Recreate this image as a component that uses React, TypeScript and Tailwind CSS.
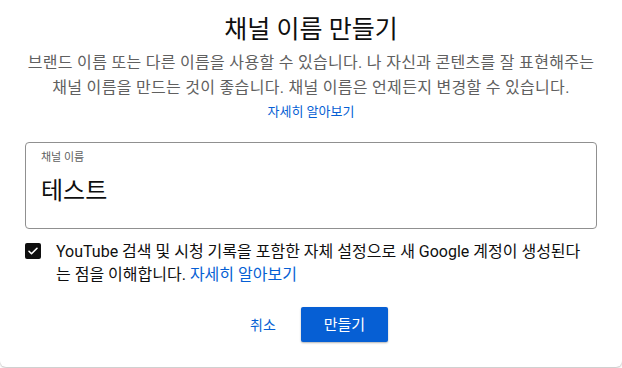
export default function App() {
  return (
    <div
      className="h-[368px] w-[622px] bg-white"
      style={{ fontFamily: 'Roboto, "Noto Sans CJK KR", sans-serif' }}
    >
      <div className="flex h-[367px] flex-col rounded-b-[6px] bg-white px-[25px] shadow-[0_1px_2px_rgba(0,0,0,0.25)]">
        <h1 className="mt-[14px] text-center text-[25px] leading-[32px] font-normal text-[#0f0f0f]">
          채널 이름 만들기
        </h1>
        <p className="mt-[4px] text-center text-[16px] leading-[25px] tracking-[0.3px] text-[#606060]">
          브랜드 이름 또는 다른 이름을 사용할 수 있습니다. 나 자신과 콘텐츠를 잘 표현해주는
          <br />
          채널 이름을 만드는 것이 좋습니다. 채널 이름은 언제든지 변경할 수 있습니다.
        </p>
        <a className="mt-[1px] self-center text-[13px] leading-[22px] text-[#065fd4]">
          자세히 알아보기
        </a>

        <div className="mt-[19px] h-[87px] rounded-[4px] border border-[#909090] px-[15px] pt-[7px]">
          <div className="text-[11px] leading-[16px] text-[#606060]">채널 이름</div>
          <div className="mt-[9px] text-[24px] leading-[32px] text-[#0f0f0f]">테스트</div>
        </div>

        <div className="mt-[14px] flex items-start gap-[15px]">
          <span className="flex h-[16px] w-[16px] shrink-0 items-center justify-center rounded-[2px] bg-[#0f0f0f]">
            <svg width="12" height="12" viewBox="0 0 24 24" fill="none">
              <path
                d="M4 12.5l5 5L20 6.5"
                stroke="white"
                strokeWidth="3.2"
                strokeLinecap="round"
                strokeLinejoin="round"
              />
            </svg>
          </span>
          <p className="-mt-[3px] text-[16px] leading-[23px] text-[#0f0f0f]">
            YouTube 검색 및 시청 기록을 포함한 자체 설정으로 새 Google 계정이 생성된다
            <br />는 점을 이해합니다. <a className="text-[#065fd4]">자세히 알아보기</a>
          </p>
        </div>

        <div className="mt-[21px] flex items-center justify-center gap-[25px] pl-[16px]">
          <button className="text-[14px] leading-[20px] text-[#065fd4]">취소</button>
          <button className="h-[35px] w-[87px] rounded-[2px] bg-[#065fd4] text-[15px] leading-[20px] text-white shadow-[0_1px_2px_rgba(0,0,0,0.3)]">
            만들기
          </button>
        </div>
      </div>
    </div>
  )
}
